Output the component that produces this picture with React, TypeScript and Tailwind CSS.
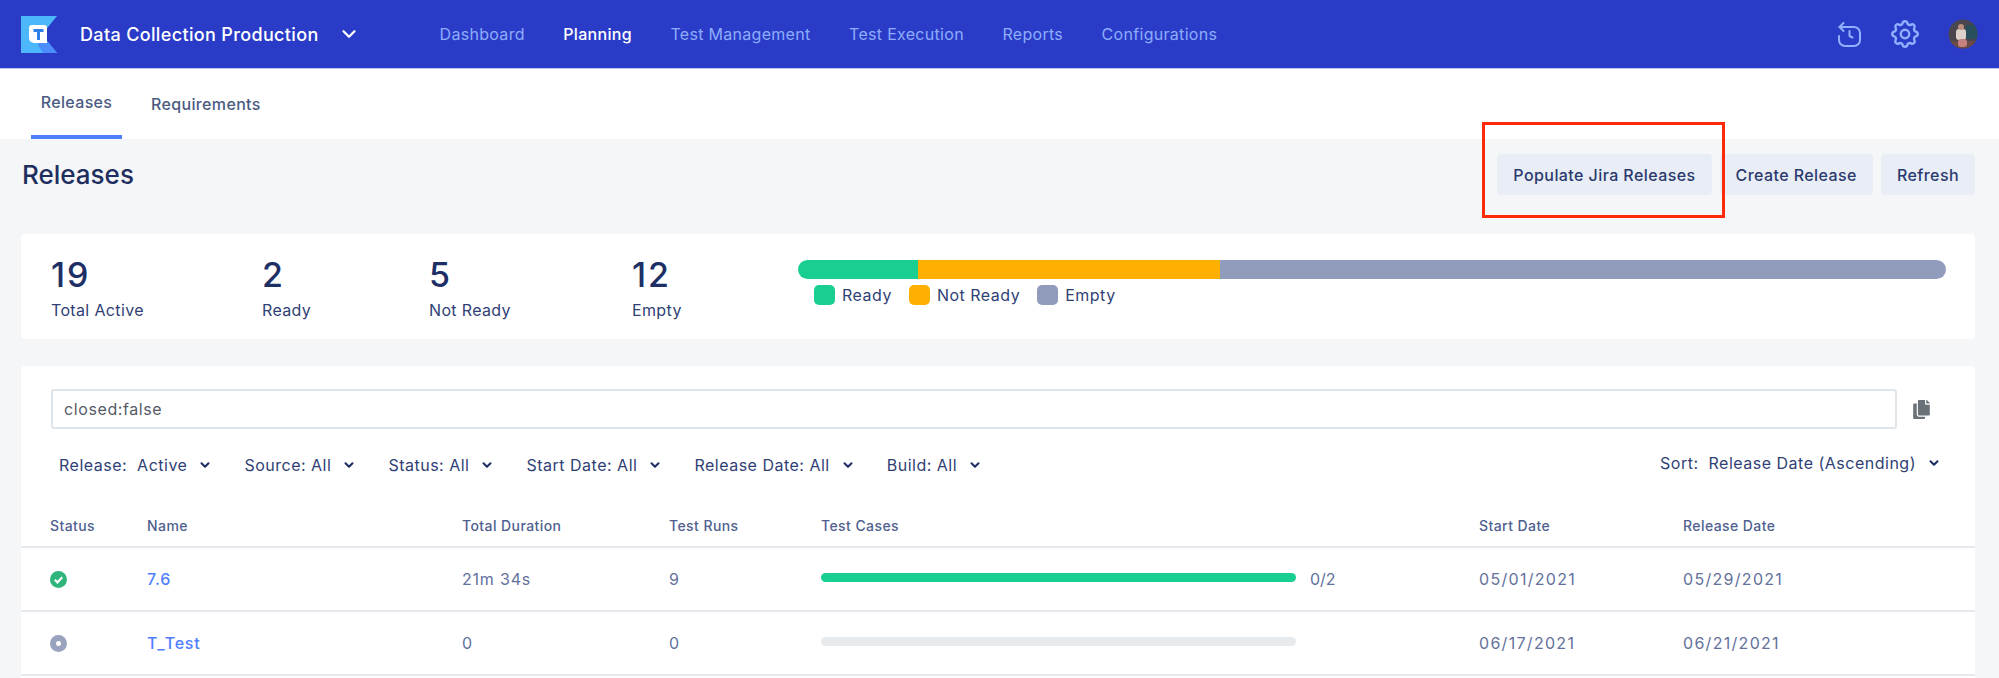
import { ChevronDown } from "lucide-react"
import { TbSettings } from "react-icons/tb"
import { FaCopy } from "react-icons/fa"

const navItems = ["Dashboard", "Planning", "Test Management", "Test Execution", "Reports", "Configurations"]
const stats = [
  { value: "19", label: "Total Active", width: "w-[211px]" },
  { value: "2", label: "Ready", width: "w-[167px]" },
  { value: "5", label: "Not Ready", width: "w-[203px]" },
  { value: "12", label: "Empty", width: "w-[166px]" },
]
const legend = [
  { label: "Ready", color: "bg-[#18cf91]" },
  { label: "Not Ready", color: "bg-[#fdb000]" },
  { label: "Empty", color: "bg-[#919cbd]" },
]
const filters = ["Source: All", "Status: All", "Start Date: All", "Release Date: All", "Build: All"]
const columns = ["Status", "Name", "Total Duration", "Test Runs", "Test Cases", "Start Date", "Release Date"]
const rowGrid = "grid grid-cols-[97px_315px_207px_152px_658px_204px_1fr] pl-[29px]"

function Logo() {
  return (
    <svg width="36" height="37" viewBox="0 0 36 37" className="shrink-0">
      <path d="M0 0H36L21 18.5L36 37H0Z" fill="#4cb8fb" />
      <path d="M17 29L21 18.5L36 37H22Z" fill="#4b8dfb" />
      <path d="M8 12a3 3 0 0 1 3-3h12a3 3 0 0 1 3 3v15H13a5 5 0 0 1-5-5Z" fill="#fff" />
      <rect x="12.5" y="13" width="10" height="3" fill="#2f7fe8" />
      <rect x="16" y="13" width="3" height="11" fill="#2f7fe8" />
    </svg>
  )
}

function HistoryIcon() {
  return (
    <svg width="25" height="25" viewBox="0 0 25 25" fill="none" stroke="#8fb0ff" strokeWidth="2" strokeLinecap="round" strokeLinejoin="round">
      <path d="M2.5 5H17a6 6 0 0 1 6 6v7a6 6 0 0 1-6 6H8a6 6 0 0 1-6-6v-4" />
      <path d="M6.5 1L2.5 5L6.5 9" />
      <path d="M12.5 9v5l3 1.5" />
    </svg>
  )
}

function Avatar() {
  return (
    <svg width="30" height="30" viewBox="0 0 30 30" className="shrink-0">
      <defs>
        <clipPath id="avatar-clip">
          <circle cx="15" cy="15" r="14.5" />
        </clipPath>
      </defs>
      <g clipPath="url(#avatar-clip)">
        <rect width="30" height="30" fill="#4a4650" />
        <rect x="18" y="6" width="12" height="14" fill="#2a4f5c" />
        <rect y="22" width="30" height="8" fill="#6b4a46" />
        <rect x="8" y="10" width="10" height="11" rx="3" fill="#dcd2ca" />
        <circle cx="13" cy="8" r="3" fill="#b98f7c" />
        <rect x="10" y="20" width="9" height="8" rx="3" fill="#c4817f" />
      </g>
    </svg>
  )
}

function Filter({ label, className }: { label: string; className?: string }) {
  return (
    <div className={"flex items-center text-[16px] tracking-[0.5px] text-[#2f3f75] " + (className ?? "")}>
      <span className="whitespace-pre">{label}</span>
      <ChevronDown size={14} strokeWidth={3.5} className="ml-[11px] text-[#1f2f66]" />
    </div>
  )
}

function StatusIcon({ ok }: { ok: boolean }) {
  return ok ? (
    <svg width="17" height="17" viewBox="0 0 17 17">
      <circle cx="8.5" cy="8.5" r="8.5" fill="#2fb57b" />
      <path d="M4.8 8.8L7.4 11.4L12.2 6.2" fill="none" stroke="#fff" strokeWidth="2.2" />
    </svg>
  ) : (
    <svg width="17" height="17" viewBox="0 0 17 17">
      <circle cx="8.5" cy="8.5" r="8.5" fill="#9aa3bd" />
      <circle cx="8.5" cy="8.5" r="2.5" fill="#fff" />
    </svg>
  )
}

function Row({ ok, name, duration, runs, start, release }: { ok: boolean; name: string; duration: string; runs: string; start: string; release: string }) {
  return (
    <div className={rowGrid + " h-[64px] items-center border-b-2 border-[#e6eaef] text-[16px] text-[#63719c]"}>
      <StatusIcon ok={ok} />
      <span className="text-[#4f7eff] font-medium tracking-[0.8px]">{name}</span>
      <span className="tracking-[0.8px]">{duration}</span>
      <span>{runs}</span>
      <div className="flex items-center">
        <div className={"w-[475px] h-[9px] rounded-full -mt-[3px] " + (ok ? "bg-[#18cf91]" : "bg-[#e8ebee]")} />
        {ok && <span className="ml-[14px]">0/2</span>}
      </div>
      <span className="tracking-[1.3px]">{start}</span>
      <span className="tracking-[1.3px]">{release}</span>
    </div>
  )
}

export default function App() {
  return (
    <div className="relative w-full h-[678px] overflow-hidden bg-[#f5f6f8] font-['Inter',sans-serif]">
      <header className="flex items-center h-[69px] pl-[21px] pr-[21px] bg-[#2a3cc7] border-b border-[#b9c4f2]">
        <Logo />
        <span className="ml-[23px] text-[18px] tracking-[0.35px] font-medium text-white whitespace-nowrap">Data Collection Production</span>
        <ChevronDown size={22} strokeWidth={2.5} className="ml-[19px] text-white" />
        <nav className="flex items-center gap-[38.5px] ml-[80px] tracking-[0.3px]">
          {navItems.map((item) => (
            <a key={item} className={item === "Planning" ? "text-[16px] font-medium text-white" : "text-[16px] text-[#8eadfb]"}>
              {item}
            </a>
          ))}
        </nav>
        <div className="flex items-center ml-auto">
          <HistoryIcon />
          <TbSettings size={34} strokeWidth={1.7} className="ml-[26px] text-[#8fb0ff]" />
          <div className="ml-[26px]">
            <Avatar />
          </div>
        </div>
      </header>

      <div className="flex h-[70px] pl-[31px] bg-white tracking-[0.35px]">
        <div className="flex items-center justify-center w-[91px] border-b-4 border-[#4f7eff] text-[16px] font-medium text-[#4b5a82]">Releases</div>
        <div className="flex items-center ml-[29px] text-[16px] font-medium text-[#4b5a82]">Requirements</div>
      </div>

      <main className="pl-[21px] pr-[24px]">
        <div className="flex items-center justify-between pt-[15px] mb-[39px]">
          <h1 className="pl-[1px] text-[26px] font-medium text-[#1e2f5f]">Releases</h1>
          <div className="flex gap-[8px]">
            {["Populate Jira Releases", "Create Release", "Refresh"].map((label) => (
              <button key={label} className="h-[41px] px-[16px] rounded-[4px] bg-[#e9eef6] text-[16px] tracking-[0.42px] font-medium text-[#2b3a6e]">
                {label}
              </button>
            ))}
          </div>
        </div>

        <section className="flex h-[105px] pl-[30px] pr-[29px] rounded-[4px] bg-white">
          {stats.map((stat) => (
            <div key={stat.label} className={stat.width + " pt-[21px]"}>
              <div className="h-[40px] leading-[40px] text-[34px] tracking-[2px] font-medium text-[#1e2f66]">{stat.value}</div>
              <div className="mt-[3px] h-[24px] leading-[24px] text-[16px] tracking-[0.35px] text-[#2f3f75]">{stat.label}</div>
            </div>
          ))}
          <div className="flex-1 pt-[26px]">
            <div className="flex h-[19px] rounded-full overflow-hidden">
              <div className="w-[120px] bg-[#18cf91]" />
              <div className="w-[302px] bg-[#fdb000]" />
              <div className="flex-1 bg-[#919cbd]" />
            </div>
            <div className="flex items-center gap-[17px] mt-[4px] ml-[16px]">
              {legend.map((item) => (
                <div key={item.label} className="flex items-center gap-[7px]">
                  <div className={"w-[21px] h-[20px] rounded-[5px] " + item.color} />
                  <span className="text-[16px] tracking-[0.5px] text-[#2f3f75]">{item.label}</span>
                </div>
              ))}
            </div>
          </div>
        </section>

        <section className="mt-[27px] pt-[23px] h-[320px] rounded-t-[4px] bg-white">
          <div className="flex items-center pl-[30px] pr-[45px]">
            <div className="flex items-center flex-1 h-[40px] pl-[11px] rounded-[3px] border-2 border-[#e0e5ea] text-[16px] tracking-[0.6px] text-[#555b66]">closed:false</div>
            <FaCopy className="ml-[16px] w-[17px] h-[19px] text-[#6b7178]" />
          </div>

          <div className="flex items-center justify-between h-[24px] mt-[24px] pl-[38px] pr-[34px]">
            <div className="flex items-center gap-[32px]">
              <Filter label="Release:  Active" />
              {filters.map((f) => (
                <Filter key={f} label={f} />
              ))}
            </div>
            <Filter label="Sort:  Release Date (Ascending)" className="mb-[5px]" />
          </div>

          <div className={rowGrid + " mt-[39px] pb-[10px] border-b-2 border-[#e6eaef] text-[14px] tracking-[0.42px] leading-[20px] font-medium text-[#4f5f8f]"}>
            {columns.map((c) => (
              <span key={c}>{c}</span>
            ))}
          </div>
          <Row ok name="7.6" duration="21m 34s" runs="9" start="05/01/2021" release="05/29/2021" />
          <Row ok={false} name="T_Test" duration="0" runs="0" start="06/17/2021" release="06/21/2021" />
        </section>
      </main>

      <div className="absolute left-[1482px] top-[122px] w-[243px] h-[96px] border-[3px] border-[#ff2a0a]" />
    </div>
  )
}
